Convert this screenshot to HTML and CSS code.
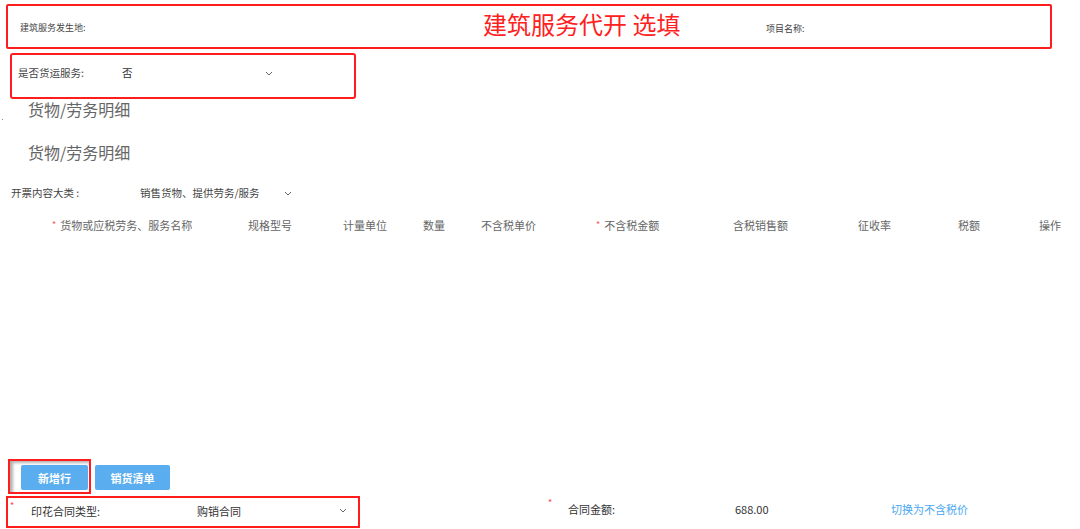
FILE: index.html
```html
<!DOCTYPE html>
<html lang="zh-CN">
<head>
<meta charset="utf-8">
<title>发票开具</title>
<link rel="stylesheet" href="styles.css">
</head>
<body>
<div class="page">
  <div class="top-box">
    <div class="cell-site"><span class="lbl-tiny">建筑服务发生地:</span></div>
    <div class="cell-title">建筑服务代开 选填</div>
    <div class="cell-proj"><span class="lbl-tiny">项目名称:</span></div>
  </div>

  <div class="freight-box">
    <div class="fr-label">是否货运服务:</div>
    <div class="fr-value">否</div>
    <svg class="chev" width="8" height="5" viewBox="0 0 8 5"><polyline points="1,1 4,4 7,1" fill="none" stroke="#666" stroke-width="1"/></svg>
  </div>

  <div class="section-title">货物/劳务明细</div>
  <div class="dot-row"><span class="dot"></span></div>
  <div class="section-title second">货物/劳务明细</div>

  <div class="filter-row">
    <div class="flt-label">开票内容大类 :</div>
    <div class="flt-value">销售货物、提供劳务/服务</div>
    <svg class="chev" width="8" height="5" viewBox="0 0 8 5"><polyline points="1,1 4,4 7,1" fill="none" stroke="#666" stroke-width="1"/></svg>
  </div>

  <div class="thead">
    <div class="th c1"><span class="req">*</span>货物或应税劳务、服务名称</div>
    <div class="th c2">规格型号</div>
    <div class="th c3">计量单位</div>
    <div class="th c4">数量</div>
    <div class="th c5">不含税单价</div>
    <div class="th c6"><span class="req">*</span>不含税金额</div>
    <div class="th c7">含税销售额</div>
    <div class="th c8">征收率</div>
    <div class="th c9">税额</div>
    <div class="th c10">操作</div>
  </div>
  <div class="tbody"></div>

  <div class="btn-row">
    <div class="hl-btn"><button class="btn">新增行</button></div>
    <button class="btn btn-list">销货清单</button>
  </div>

  <div class="bottom-row">
    <div class="stamp-box">
      <span class="req-b">*</span>
      <div class="st-label">印花合同类型:</div>
      <div class="st-value">购销合同</div>
      <svg class="chev" width="8" height="5" viewBox="0 0 8 5"><polyline points="1,1 4,4 7,1" fill="none" stroke="#666" stroke-width="1"/></svg>
    </div>
    <div class="amount">
      <span class="req-b req-amt">*</span>
      <div class="am-label">合同金额:</div>
      <div class="am-value">688.00</div>
      <a class="am-link">切换为不含税价</a>
    </div>
  </div>
</div>
</body>
</html>
```

FILE: styles.css
```css
* { box-sizing: border-box; }
html, body { margin: 0; padding: 0; background: #fff; }
body {
  font-family: "Noto Sans CJK SC", "Noto Sans", sans-serif;
  color: #444;
  width: 1080px;
  height: 529px;
  overflow: hidden;
}
.page { display: flex; flex-direction: column; }

.top-box {
  margin: 4px 0 0 6px;
  width: 1046px;
  height: 45px;
  border: 2px solid #ff1c1c;
  border-radius: 2px;
  display: flex;
  align-items: center;
  padding-bottom: 5px;
}
.cell-site { width: 475px; padding-left: 12px; }
.lbl-tiny { font-size: 9px; color: #444; line-height: 12px; }
.cell-title {
  width: 283px;
  font-size: 24px;
  line-height: 28px;
  color: #ff2020;
}
.cell-proj { padding-top: 2px; }

.freight-box {
  margin: 4px 0 0 10px;
  width: 346px;
  height: 46px;
  border: 2px solid #ff1c1c;
  border-radius: 3px;
  padding: 11px 0 0 6px;
  display: flex;
  align-items: flex-start;
  font-size: 10.5px;
  line-height: 14px;
}
.fr-label { width: 104px; color: #444; }
.fr-value { width: 143px; color: #333; }
.chev { display: block; margin-top: 5px; }

.section-title {
  margin-left: 28px;
  font-size: 16px;
  line-height: 20px;
  color: #666;
  height: 20px;
}
.dot-row { height: 1px; }
.dot { display: block; margin-left: 2px; width: 1px; height: 1px; background: #888; }
.section-title.second { margin-top: 22px; }

.filter-row {
  margin: 23px 0 0 11px;
  display: flex;
  align-items: flex-start;
  font-size: 10.5px;
  line-height: 16px;
}
.flt-label { width: 129px; color: #444; }
.flt-value { width: 144px; color: #444; }
.filter-row .chev { margin-top: 6px; margin-left: 0; }

.thead {
  margin-top: 16px;
  display: flex;
  font-size: 11px;
  line-height: 16px;
  color: #666;
  padding-left: 52px;
}
.th { white-space: nowrap; }
.req { color: #f55; margin-right: 4px; font-size: 9px; vertical-align: top; }
.c1 { width: 196px; }
.c2 { width: 95px; }
.c3 { width: 80px; }
.c4 { width: 58px; }
.c5 { width: 115px; }
.c6 { width: 137px; }
.c7 { width: 125px; }
.c8 { width: 100px; }
.c9 { width: 81px; }
.c10 { width: 40px; }

.tbody { height: 226px; }

.btn-row { display: flex; align-items: flex-start; margin-left: 8px; }
.hl-btn {
  width: 83px;
  height: 35px;
  border: 2px solid #ff1c1c;
  padding: 4px 0 0 11px;
  box-shadow: inset 3px 2px 3px rgba(0, 0, 0, 0.3);
}
.btn {
  border: none;
  border-radius: 2px;
  background: #5aadee;
  color: #fff;
  font-family: "Noto Sans CJK SC", "Noto Sans", sans-serif;
  font-size: 11px;
  font-weight: bold;
  height: 25px;
  width: 67px;
  padding: 0;
  display: block;
}
.btn-list { width: 75px; margin: 6px 0 0 4px; }

.bottom-row { display: flex; margin-top: 2px; }
.stamp-box {
  margin-left: 6px;
  width: 354px;
  height: 32px;
  border: 2px solid #ff1c1c;
  padding: 3px 0 0 2px;
  display: flex;
  align-items: flex-start;
  font-size: 11px;
  line-height: 16px;
}
.req-b { color: #f44; width: 21px; font-size: 9px; line-height: 10px; }
.st-label { width: 166px; margin-top: 2px; color: #333; }
.st-value { width: 142px; margin-top: 2px; color: #333; }
.stamp-box .chev { margin-top: 7px; }
.amount {
  display: flex;
  align-items: flex-start;
  margin-left: 188px;
  padding-top: 2px;
  font-size: 11px;
  line-height: 16px;
}
.req-amt { width: 20px; }
.am-label { width: 167px; margin-top: 3px; color: #333; }
.am-value { width: 156px; margin-top: 3px; color: #333; }
.am-link { margin-top: 3px; color: #4aa8f0; text-decoration: none; }
```
